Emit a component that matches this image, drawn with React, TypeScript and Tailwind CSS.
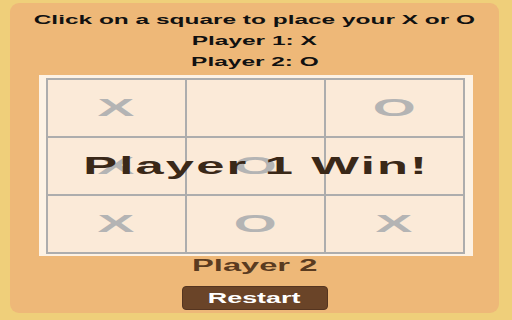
import React from 'react';

const BOARD: string[] = ['X', '', 'O', 'X', 'O', '', 'X', 'O', 'X'];

const font = { fontFamily: '"Liberation Sans", Arial, sans-serif' };

const Stretched: React.FC<{ className?: string; children: React.ReactNode }> = ({ className, children }) => (
    <span className={`inline-block whitespace-nowrap ${className ?? ''}`}>{children}</span>
);

export default function App() {
    return (
        <div className="w-[512px] h-[320px] bg-[#efcf7a] pt-[3px] pl-[10px] overflow-hidden" style={font}>
            <div className="w-[489px] h-[310px] rounded-[9px] bg-[#eeb878] flex flex-col items-center pt-[6px]">
                {/* Instructions */}
                <div className="h-[21px] flex items-center justify-center text-[13px] font-bold text-[#111]">
                    <Stretched className="scale-x-[1.88]">Click on a square to place your X or O</Stretched>
                </div>
                <div className="h-[21px] flex items-center justify-center text-[13px] font-bold text-[#111]">
                    <Stretched className="scale-x-[1.88]">Player 1: X</Stretched>
                </div>
                <div className="h-[21px] flex items-center justify-center text-[13px] font-bold text-[#111]">
                    <Stretched className="scale-x-[1.88]">Player 2: O</Stretched>
                </div>

                {/* Board */}
                <div className="self-start ml-[29px] mt-[3px] bg-[#fdf2e4] pl-[7px] pr-[8px] pt-[3px] pb-[2px]">
                    <div className="relative">
                        <div className="grid grid-cols-3 gap-[2px] p-[2px] bg-[#adadad]">
                            {BOARD.map((v, i) => (
                                <div key={i} className="w-[137px] h-[56px] bg-[#fbead8] flex items-center justify-center">
                                    {v && (
                                        <span className="inline-block text-[24px] font-bold text-[#b4b4b4] scale-x-[2.3] leading-none">
                                            {v}
                                        </span>
                                    )}
                                </div>
                            ))}
                        </div>
                        <div className="absolute inset-0 flex items-center justify-center">
                            <span className="inline-block whitespace-nowrap text-[23px] font-bold text-[#3a2818] scale-x-[2.2] tracking-[1px] pl-[1px]">
                                Player 1 Win!
                            </span>
                        </div>
                    </div>
                </div>

                {/* Turn */}
                <div className="h-[20px] flex items-center justify-center text-[16px] font-bold text-[#5a3b20]">
                    <Stretched className="scale-x-[2.04]">Player 2</Stretched>
                </div>

                <button className="mt-[10px] w-[146px] h-[24px] rounded-[4px] bg-[#6a4428] border border-[#553520] flex items-center justify-center text-[14px] font-bold text-white">
                    <Stretched className="scale-x-[1.92]">Restart</Stretched>
                </button>
            </div>
        </div>
    );
}
